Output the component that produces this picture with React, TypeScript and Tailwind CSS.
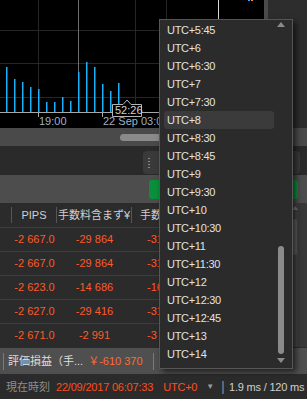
import React from 'react';

const zones = [
  'UTC+5:45', 'UTC+6', 'UTC+6:30', 'UTC+7', 'UTC+7:30', 'UTC+8', 'UTC+8:30', 'UTC+8:45', 'UTC+9', 'UTC+9:30',
  'UTC+10', 'UTC+10:30', 'UTC+11', 'UTC+11:30', 'UTC+12', 'UTC+12:30', 'UTC+12:45', 'UTC+13', 'UTC+14',
];

const rows = [
  ['-2 667.0', '-29 864', '-31 992'],
  ['-2 667.0', '-29 864', '-31 992'],
  ['-2 623.0', '-14 686', '-16 044'],
  ['-2 627.0', '-29 416', '-31 540'],
  ['-2 671.0', '-2 991', '-3 210'],
];

// bar tops, one every 8px starting at x=6
const bars = [67, 79, 82, 87, 89, 102, 102, 97, 101, 72, 62, 67, 84, 91, 83];

const Chart = () => (
  <svg width="264" height="128" className="block">
    <rect width="264" height="128" fill="#000" />
    {[30, 63, 97].map((y) => (
      <line key={y} x1="0" x2="264" y1={y + 0.5} y2={y + 0.5} stroke="#262626" />
    ))}
    {[38, 135, 166].map((x) => (
      <line key={x} x1={x + 0.5} x2={x + 0.5} y1="0" y2="112" stroke="#262626" />
    ))}
    <line x1="78.5" x2="78.5" y1="0" y2="112" stroke="#6e6e6e" />
    <line x1="218.5" x2="218.5" y1="0" y2="20" stroke="#d8d8d8" />
    <rect x="248" y="0" width="2" height="1" fill="#4aa3ff" />
    <rect x="251" y="0" width="2" height="1" fill="#ff8a3a" />
    {bars.map((top, i) => (
      <rect key={i} x={6 + i * 8} y={top} width="1.5" height={112 - top} fill="#19b2fb" />
    ))}
    <line x1="0" x2="264" y1="112.5" y2="112.5" stroke="#a8a8a8" />
    <line x1="38.5" x2="38.5" y1="112" y2="117" stroke="#a8a8a8" />
    <line x1="102.5" x2="102.5" y1="112" y2="117" stroke="#a8a8a8" />
    <text x="39" y="125" fill="#9fb2c6" fontSize="11" fontFamily="Liberation Sans, sans-serif">19:00</text>
    <text x="103" y="125" fill="#9fb2c6" fontSize="11" fontFamily="Liberation Sans, sans-serif">22 Sep 03:00</text>
    {/* hover time tooltip */}
    <path d="M112.5 104.5 H123 L127 100 L131 104.5 H141.5 V116.5 H112.5 Z" fill="#000" stroke="#b5b5b5" />
    <text x="115" y="114" fill="#cfcfcf" fontSize="11" fontFamily="Liberation Sans, sans-serif">52:26</text>
  </svg>
);

const TimezoneMenu = () => (
  <div className="absolute left-[159px] top-[19px] w-[134px] h-[350px] bg-[#2b2b2b] border border-[#565656] shadow-[3px_3px_6px_rgba(0,0,0,0.6)]">
    <div className="flex h-full">
      <ul className="flex-1 pt-px pl-[4px]">
        {zones.map((z) => (
          <li
            key={z}
            className={`h-[18px] leading-[18px] pl-[3px] text-[11px] tracking-[-0.3px] text-[#e2e2e2] rounded-[3px] ${
              z === 'UTC+8' ? 'bg-[#3b3b3b]' : ''
            }`}
          >
            {z}
          </li>
        ))}
      </ul>
      <div className="w-[18px] flex flex-col items-center pt-[2px] pb-[5px] pr-[4px]">
        <span className="w-0 h-0 border-x-[4px] border-x-transparent border-b-[5px] border-b-[#8a8a8a]" />
        <div className="flex-1 flex flex-col justify-end w-full items-center pb-[4px]">
          <div className="w-[6px] h-[108px] rounded-full bg-[#8b8b8b]" />
        </div>
        <span className="w-0 h-0 border-x-[4px] border-x-transparent border-t-[5px] border-t-[#8a8a8a]" />
      </div>
    </div>
  </div>
);

export default function App() {
  return (
    <div className="relative w-[307px] h-[399px] overflow-hidden bg-[#2b2b2b] font-['Liberation_Sans','Noto_Sans_CJK_JP',sans-serif] text-[11px]">
      {/* chart */}
      <div className="flex h-[128px]">
        <Chart />
        <div className="w-[4px] bg-[#4b4b4b]" />
        <div className="flex-1 bg-[#2d2d2d]" />
      </div>

      {/* horizontal scroller */}
      <div className="h-[18px] bg-[#4a4a4a] flex items-center pl-[120px]">
        <div className="h-[7px] w-[150px] rounded-full bg-[#8a8a8a]" />
      </div>

      {/* toolbar */}
      <div className="h-[29px] bg-[#2a2a2a] flex items-end pl-[143px] pr-[7px] pb-[1px]">
        <div className="h-[23px] flex-1 rounded-[4px] bg-[#3a3a3a] flex items-center pl-[5px]">
          <div className="grid grid-cols-1 gap-[2px]">
            {[0, 1, 2, 3].map((i) => (
              <span key={i} className="block w-[2px] h-[1px] bg-[#8a8a8a]" />
            ))}
          </div>
        </div>
      </div>

      {/* action band */}
      <div className="h-[28px] bg-[#4d4d4d] pl-[149px] pr-[9px] pt-[5px]">
        <div className="h-[19px] rounded-[3px] bg-[#0b8f3c]" />
      </div>

      {/* positions table */}
      <div className="flex">
        <div className="flex-1">
          <div className="grid grid-cols-[12px_45px_75px_1fr] h-[24px] items-center text-[#d0d0d0]">
            <div className="h-[16px] border-r border-[#555]" />
            <div className="h-[16px] leading-[16px] text-center border-r border-[#555]">PIPS</div>
            <div className="h-[16px] leading-[16px] text-center border-r border-[#555] whitespace-nowrap overflow-hidden">手数料含まず¥</div>
            <div className="h-[16px] leading-[16px] pl-[8px] whitespace-nowrap overflow-hidden">手数料込み¥</div>
          </div>
          {rows.map((r, i) => (
            <div
              key={i}
              className="grid grid-cols-[12px_45px_75px_1fr] h-[24px] items-center text-[#ff5a29] border-t border-[#3d3d3d]"
            >
              <div />
              <div className="text-center whitespace-nowrap">{r[0]}</div>
              <div className="text-center whitespace-nowrap">{r[1]}</div>
              <div className="pl-[15px] whitespace-nowrap">{r[2]}</div>
            </div>
          ))}
        </div>
        <div className="w-[15px] flex">
          <div className="w-[6px] bg-[#444] flex flex-col items-center pt-[3px]">
            <span className="w-0 h-0 border-x-[3px] border-x-transparent border-b-[4px] border-b-[#777]" />
            <div className="mt-[9px] w-[4px] h-[36px] rounded-[2px] bg-[#5e5e5e]" />
          </div>
          <div className="flex-1 bg-[#383838]" />
        </div>
      </div>

      {/* summary */}
      <div className="h-[26px] mt-px bg-[#4f4f4f] flex items-center pl-[3px] whitespace-nowrap">
        <span className="w-px h-[17px] bg-[#7a7a7a]" />
        <span className="ml-[4px] text-[#dedede]">評価損益（手...</span>
        <span className="ml-[5px] text-[#ff6a2e]">￥-610 370</span>
        <span className="ml-[10px] w-px h-[17px] bg-[#7a7a7a]" />
      </div>

      {/* status bar */}
      <div className="h-[26px] bg-[#2b2b2b] flex items-center pl-[6px] whitespace-nowrap tracking-[-0.2px]">
        <span className="text-[#8d8d8d] tracking-normal">現在時刻</span>
        <span className="ml-[6px] text-[#ff4d1f]">22/09/2017 06:07:33</span>
        <span className="ml-[10px] text-[#ff4d1f]">UTC+0</span>
        <span className="ml-[9px] text-[8px] text-[#9a9a9a]">▼</span>
        <span className="ml-[8px] w-[2px] h-[13px] bg-[#4b6a8c]" />
        <span className="ml-[5px] text-[#cfcfcf]">1.9 ms / 120 ms</span>
      </div>

      <TimezoneMenu />
    </div>
  );
}
